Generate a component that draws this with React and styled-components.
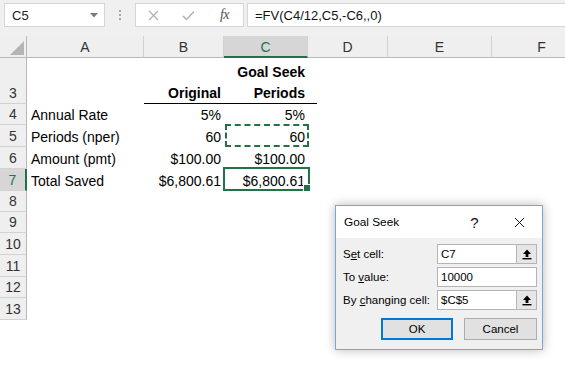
import React from 'react';
import styled, { createGlobalStyle, css } from 'styled-components';

const GREEN = '#217346';
const COLS = '27px 117px 80px 84px 80px 104px 100px';

const GlobalStyle = createGlobalStyle`
  html, body { margin: 0; padding: 0; background: #fff; overflow: hidden; }
  body { font-family: "Liberation Sans", Arial, sans-serif; color: #000; }
  * { box-sizing: border-box; }
`;

const Window = styled.div`
  position: relative;
  width: 565px;
  height: 365px;
  overflow: hidden;
  background: #fff;
`;

/* ---------- formula bar ---------- */
const FormulaBar = styled.div`
  display: flex;
  align-items: flex-start;
  height: 36px;
  padding: 3px 0 0 4px;
  background: #f0f0f0;
`;

const NameBox = styled.div`
  width: 101px;
  height: 24px;
  flex: none;
  background: #fff;
  border: 1px solid #d6d6d6;
  display: flex;
  align-items: center;
  justify-content: space-between;
  padding: 0 6px 0 7px;
  font-size: 13px;
  color: #222;
`;

const Grip = styled.div`
  width: 30px;
  height: 24px;
  flex: none;
  display: flex;
  flex-direction: column;
  align-items: center;
  justify-content: center;
  gap: 2px;
  & > span { width: 2px; height: 2px; background: #a8a8a8; }
`;

const FxBox = styled.div`
  width: 109px;
  height: 24px;
  flex: none;
  background: #fff;
  border: 1px solid #d6d6d6;
  display: grid;
  grid-template-columns: 35px 35px 1fr;
  align-items: center;
  justify-items: center;
`;

const FxLabel = styled.span`
  font-family: "Liberation Serif", "Times New Roman", serif;
  font-style: italic;
  font-size: 14px;
  color: #505050;
  letter-spacing: -0.5px;
`;

const FormulaInput = styled.div`
  flex: 1;
  height: 24px;
  margin-left: 3px;
  background: #fff;
  border: 1px solid #d6d6d6;
  border-right: none;
  display: flex;
  align-items: center;
  padding-left: 7px;
  font-size: 13px;
  color: #111;
  white-space: nowrap;
`;

/* ---------- sheet ---------- */
const HeaderRow = styled.div`
  display: grid;
  grid-template-columns: ${COLS};
  height: 22px;
  background: #efefef;
`;

const Corner = styled.div`
  position: relative;
  border-right: 1px solid #b8b8b8;
  border-bottom: 1px solid #b8b8b8;
  &::after {
    content: '';
    position: absolute;
    right: 2px;
    bottom: 2px;
    width: 14px;
    height: 14px;
    background: #b4b4b4;
    clip-path: polygon(100% 0, 100% 100%, 0 100%);
  }
`;

const ColHead = styled.div`
  display: flex;
  align-items: flex-end;
  justify-content: center;
  line-height: 16px;
  padding-bottom: 2px;
  font-size: 14px;
  color: #333;
  border-right: 1px solid #d2d2d2;
  border-bottom: 1px solid #b8b8b8;
  ${(p) =>
    p.$active &&
    css`
      background: #d6d6d6;
      color: ${GREEN};
      border-bottom: 2px solid ${GREEN};
      padding-bottom: 1px;
    `}
`;

const Row = styled.div`
  display: grid;
  grid-template-columns: ${COLS};
  height: ${(p) => p.$h}px;
`;

const RowHead = styled.div`
  display: flex;
  align-items: flex-end;
  justify-content: center;
  line-height: 16px;
  padding-bottom: 2px;
  font-size: 14px;
  color: #333;
  background: #efefef;
  border-right: 1px solid #b8b8b8;
  border-bottom: 1px solid #d2d2d2;
  ${(p) =>
    p.$active &&
    css`
      background: #d6d6d6;
      color: ${GREEN};
      border-right: 2px solid ${GREEN};
    `}
`;

const Cell = styled.div`
  position: relative;
  display: flex;
  align-items: flex-end;
  justify-content: ${(p) => (p.$right ? 'flex-end' : 'flex-start')};
  text-align: ${(p) => (p.$right ? 'right' : 'left')};
  padding: 0 3px 2px 4px;
  font-size: 14px;
  line-height: 16px;
  white-space: nowrap;
  font-weight: ${(p) => (p.$bold ? 700 : 400)};
  ${(p) =>
    p.$head &&
    css`
      line-height: 21px;
      padding-bottom: 0;
    `}
  ${(p) =>
    p.$underline &&
    css`
      &::after {
        content: '';
        position: absolute;
        left: 0;
        right: ${p.$underline === 'ext' ? '-9px' : '0'};
        bottom: 0;
        height: 1px;
        background: #000;
      }
    `}
  ${(p) =>
    p.$dashed &&
    css`
      &::before {
        content: '';
        position: absolute;
        top: -1px;
        right: -1px;
        bottom: 0;
        left: 1px;
        border: 2px dashed ${GREEN};
      }
    `}
  ${(p) =>
    p.$selected &&
    css`
      &::before {
        content: '';
        position: absolute;
        top: -2px;
        right: -2px;
        bottom: 0;
        left: -1px;
        border: 2px solid ${GREEN};
      }
      &::after {
        content: '';
        position: absolute;
        right: -3px;
        bottom: -1px;
        width: 6px;
        height: 6px;
        background: ${GREEN};
        border: 1px solid #fff;
      }
    `}
`;

/* ---------- dialog ---------- */
const Dialog = styled.div`
  position: absolute;
  left: 335px;
  top: 205px;
  width: 208px;
  height: 145px;
  border: 1px solid #7fa3d3;
  background: #f0f0f0;
  box-shadow: 0 0 10px rgba(0, 0, 0, 0.28);
  display: flex;
  flex-direction: column;
  font-size: 11.5px;
`;

const TitleBar = styled.div`
  height: 32px;
  flex: none;
  background: #fff;
  display: flex;
  align-items: center;
  padding-left: 8px;
`;

const Title = styled.span`
  flex: 1;
  font-size: 11.8px;
  color: #000;
`;

const TitleButton = styled.div`
  width: 45px;
  height: 32px;
  display: flex;
  align-items: center;
  justify-content: center;
  font-size: 15px;
  color: #111;
`;

const Body = styled.div`
  display: grid;
  grid-template-columns: 94px 1fr;
  grid-auto-rows: 20px;
  row-gap: 3px;
  align-items: center;
  padding: 6px 5px 0 7px;
`;

const Label = styled.span`
  white-space: nowrap;
  color: #000;
`;

const Field = styled.div`
  display: flex;
  height: 20px;
  border: 1px solid #b4b4b4;
  background: #fff;
`;

const FieldText = styled.div`
  flex: 1;
  display: flex;
  align-items: center;
  padding-left: 3px;
  color: #000;
`;

const PickButton = styled.div`
  width: 20px;
  flex: none;
  display: flex;
  align-items: center;
  justify-content: center;
  background: #e6e6e6;
  border-left: 1px solid #b4b4b4;
`;

const Actions = styled.div`
  grid-column: 1 / -1;
  display: flex;
  justify-content: flex-end;
  gap: 11px;
  margin-top: 11px;
  height: 22px;
`;

const DlgButton = styled.div`
  width: ${(p) => p.$w}px;
  height: 22px;
  display: flex;
  align-items: center;
  justify-content: center;
  background: #e1e1e1;
  border: ${(p) => (p.$default ? `2px solid #0078d7` : `1px solid #adadad`)};
  color: #000;
`;

const UpIcon = () => (
  <svg width="10" height="11" viewBox="0 0 10 11">
    <path d="M5 0.5 L1 5 L3.6 5 L3.6 8 L6.4 8 L6.4 5 L9 5 Z" fill="#000" />
    <rect x="0.5" y="9" width="9" height="1.4" fill="#000" />
  </svg>
);

const Caret = () => (
  <svg width="8" height="5" viewBox="0 0 8 5">
    <path d="M0 0 L8 0 L4 4.5 Z" fill="#7a7a7a" />
  </svg>
);

const CrossIcon = ({ size = 11, color = '#b2b2b2', w = 1.3 }) => (
  <svg width={size} height={size} viewBox="0 0 11 11">
    <path d="M1 1 L10 10 M10 1 L1 10" stroke={color} strokeWidth={w} fill="none" />
  </svg>
);

const CheckIcon = () => (
  <svg width="13" height="11" viewBox="0 0 13 11">
    <path d="M1 6 L4.5 9.5 L12 1.5" stroke="#b2b2b2" strokeWidth="1.5" fill="none" />
  </svg>
);

const columns = ['A', 'B', 'C', 'D', 'E', 'F'];

const rows = [
  {
    n: 3,
    h: 46,
    cells: [
      {},
      { t: 'Original', bold: true, right: true, head: true, underline: 'in' },
      { t: ['Goal Seek', 'Periods'], bold: true, right: true, head: true, underline: 'ext' },
    ],
  },
  { n: 4, h: 21, cells: [{ t: 'Annual Rate' }, { t: '5%', right: true }, { t: '5%', right: true }] },
  { n: 5, h: 22, cells: [{ t: 'Periods (nper)' }, { t: '60', right: true }, { t: '60', right: true, dashed: true }] },
  { n: 6, h: 22, cells: [{ t: 'Amount (pmt)' }, { t: '$100.00', right: true }, { t: '$100.00', right: true }] },
  {
    n: 7,
    h: 22,
    active: true,
    cells: [{ t: 'Total Saved' }, { t: '$6,800.61', right: true }, { t: '$6,800.61', right: true, selected: true }],
  },
  { n: 8, h: 21, cells: [] },
  { n: 9, h: 21, cells: [] },
  { n: 10, h: 22, cells: [] },
  { n: 11, h: 22, cells: [] },
  { n: 12, h: 21, cells: [] },
  { n: 13, h: 22, cells: [] },
];

export default function App() {
  return (
    <Window>
      <GlobalStyle />
      <FormulaBar>
        <NameBox>
          <span>C5</span>
          <Caret />
        </NameBox>
        <Grip>
          <span />
          <span />
          <span />
        </Grip>
        <FxBox>
          <CrossIcon />
          <CheckIcon />
          <FxLabel>fx</FxLabel>
        </FxBox>
        <FormulaInput>=FV(C4/12,C5,-C6,,0)</FormulaInput>
      </FormulaBar>

      <HeaderRow>
        <Corner />
        {columns.map((c) => (
          <ColHead key={c} $active={c === 'C'}>
            {c}
          </ColHead>
        ))}
      </HeaderRow>

      {rows.map((r) => (
        <Row key={r.n} $h={r.h}>
          <RowHead $active={r.active}>{r.n}</RowHead>
          {columns.map((c, i) => {
            const d = r.cells[i] || {};
            return (
              <Cell
                key={c}
                $right={d.right}
                $bold={d.bold}
                $head={d.head}
                $underline={d.underline}
                $dashed={d.dashed}
                $selected={d.selected}
              >
                {Array.isArray(d.t) ? (
                  <span>
                    {d.t[0]}
                    <br />
                    {d.t[1]}
                  </span>
                ) : (
                  d.t
                )}
              </Cell>
            );
          })}
        </Row>
      ))}

      <Dialog>
        <TitleBar>
          <Title>Goal Seek</Title>
          <TitleButton>?</TitleButton>
          <TitleButton>
            <CrossIcon size={11} color="#111" w={1} />
          </TitleButton>
        </TitleBar>
        <Body>
          <Label>
            S<u>e</u>t cell:
          </Label>
          <Field>
            <FieldText>C7</FieldText>
            <PickButton>
              <UpIcon />
            </PickButton>
          </Field>
          <Label>
            To <u>v</u>alue:
          </Label>
          <Field>
            <FieldText>10000</FieldText>
          </Field>
          <Label>
            By <u>c</u>hanging cell:
          </Label>
          <Field>
            <FieldText>$C$5</FieldText>
            <PickButton>
              <UpIcon />
            </PickButton>
          </Field>
          <Actions>
            <DlgButton $w={72} $default>
              OK
            </DlgButton>
            <DlgButton $w={73}>Cancel</DlgButton>
          </Actions>
        </Body>
      </Dialog>
    </Window>
  );
}
